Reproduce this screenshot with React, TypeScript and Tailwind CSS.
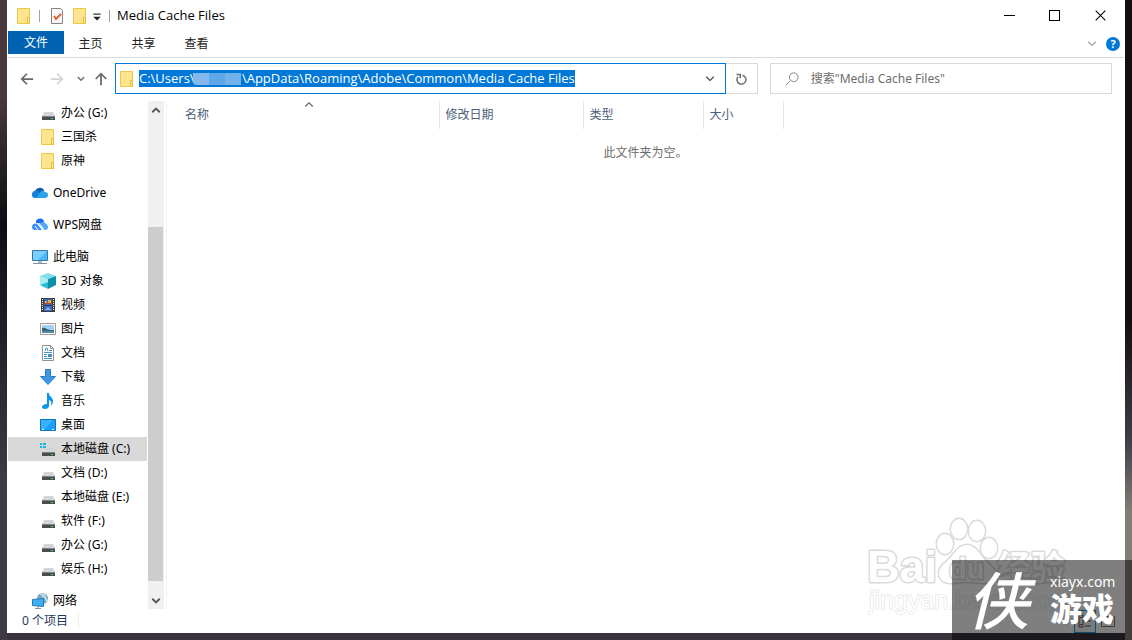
import React, { useEffect, useRef } from "react";

type IconProps = { children: React.ReactNode; className?: string };

const Icon = ({ children, className = "size-4 shrink-0" }: IconProps) => (
  <svg viewBox="0 0 16 16" className={className} fill="none" aria-hidden="true">
    {children}
  </svg>
);

const FolderIcon = () => (
  <Icon>
    <path d="M1.500.5h12v15h-12z" fill="#ffe48f" stroke="#edc74a" />
    <path d="M11.500 9.500h2v6h-2z" fill="#ffe48f" stroke="#e9bf3b" />
  </Icon>
);

const Drive = () => (
  <>
    <path d="M4 7h9l2 4H2z" fill="#d3d6d9" />
    <path d="M2 11h13v4H2z" fill="#4a4d50" />
    <path d="M2 11h13v1H2z" fill="#7d8184" />
    <path d="M11 13h2v1h-2z" fill="#2fe04a" />
  </>
);

const DriveIcon = () => (
  <Icon>
    <Drive />
  </Icon>
);

const SystemDriveIcon = () => (
  <Icon>
    <Drive />
    <path d="M0 2h2v2H0zM3 2h3v2H3zM0 5h2v2H0zM3 5h3v2H3z" fill="#19b5ea" />
  </Icon>
);

const OneDriveIcon = () => (
  <Icon>
    <path d="M3 7a5 5 0 0 1 9-2l-2 6H2z" fill="#0a5fb4" />
    <path d="M0 10a4 4 0 0 1 6-4l6 7H3a3 3 0 0 1-3-3z" fill="#1681d8" />
    <path d="M7 9c2-4 5-3 6-2a3 3 0 0 1 0 6H4z" fill="#2ba4ee" />
  </Icon>
);

const WpsIcon = () => (
  <Icon>
    <path d="M4 6a4 4 0 0 1 8-1l1 3-4 1-3-3z" fill="#1b6cf2" />
    <path d="M0 10c0-3 4-5 6-2l4 5H3a3 3 0 0 1-3-3z" fill="#3a8dff" />
    <path d="M8 6c3-2 8 1 8 4 0 2-1 3-3 3h-1z" fill="#52a9ff" />
    <path d="m7 6 5 7M3 9l3 4" stroke="#fff" />
  </Icon>
);

const ComputerIcon = () => (
  <Icon>
    <path d="M.5 1.500h15v10H.5z" fill="#46b8ff" stroke="#38769b" />
    <path d="M1 2h14L6 11H1z" fill="#76cfff" />
    <path d="M6 12h4v2H6z" fill="#b3bec5" />
    <path d="M1 14.500h14" stroke="#7f929d" />
  </Icon>
);

const CubeIcon = () => (
  <Icon>
    <path d="m0 3 8-3 8 3-8 3z" fill="#7fe0eb" />
    <path d="m0 3 8 3v10l-8-4z" fill="#28bdd1" />
    <path d="m8 6 8-3v9l-8 4z" fill="#0c91a8" />
    <path d="m0 3 8 3v3L0 12z" fill="#a5edf3" />
  </Icon>
);

const VideoIcon = () => (
  <Icon>
    <path d="M1 1h14v14H1z" fill="#3d3d3d" />
    <path d="M4 2h8v6H4zM4 9h8v5H4z" fill="#3e67c8" />
    <path d="M5 4h2v2H5zM8 3h3v3H8z" fill="#e3b22b" />
    <path d="M4 6h8v1H4z" fill="#ba4234" />
    <path d="m5 13 3-3 3 3z" fill="#80b9ee" />
    <path d="M2.500 2v12M13.500 2v12" stroke="#ececec" strokeDasharray="1 1" />
  </Icon>
);

const PictureIcon = () => (
  <Icon>
    <path d="M.5 2.500h15v11H.5z" fill="#fff" stroke="#9b9b9b" />
    <path d="M2 4h12v8H2z" fill="#a7d1f3" />
    <path d="M2 7c4-1 5 3 12 2v3H2z" fill="#396477" />
    <path d="M2 10h12v2H2z" fill="#558ba5" />
  </Icon>
);

const DocumentIcon = () => (
  <Icon>
    <path d="M2.500.5h8l3 3v12h-11z" fill="#fff" stroke="#919191" />
    <path d="M10.500.5v3h3" stroke="#919191" />
    <path d="m5 6 1-3h1l1 3M9 5.500h3M4 7.500h8M4 9.500h3M4 11.500h3M4 13.500h8" stroke="#3994d1" />
    <path d="M8 9h4v3H8z" fill="#5a88a7" />
  </Icon>
);

const DownloadIcon = () => (
  <Icon>
    <path d="M5.500.5h5v7h5L8 15.500.5 7.500h5z" fill="#3d97e5" stroke="#277fc8" />
  </Icon>
);

const MusicIcon = () => (
  <Icon>
    <path
      d="M7 0h2c0 4 4 4 4 8 0 2-1 4-2 5 1-4 0-5-2-6v6c0 2-2 3-4 3s-3-1-3-2c0-2 3-3 5-3z"
      fill="#0895ee"
    />
  </Icon>
);

const DesktopIcon = () => (
  <Icon>
    <path d="M.5 2.500h15v11H.5z" fill="#18a0fb" stroke="#0b75bd" />
    <path d="M1 3h12L5 12H1z" fill="#38b1ff" />
    <path d="M2 12.500h2m8 0h2" stroke="#d8efff" />
  </Icon>
);

const NetworkIcon = () => (
  <Icon>
    <circle cx="10.500" cy="5.500" r="5.500" fill="#77a9c4" />
    <path d="M8 1c4 0 1 3 4 3s1 3 3 4M11 1l3 2" stroke="#d0e6f0" strokeWidth="1.500" />
    <path d="m.5 6.500 11-1v8l-11-1z" fill="#3baff4" stroke="#2776ac" />
    <path d="M3 15.500h6M6 13v2" stroke="#7695a8" />
  </Icon>
);

const ChevronIcon = () => (
  <Icon className="size-3 shrink-0">
    <path d="m3 5 5 5 5-5" stroke="currentColor" strokeWidth="1.500" />
  </Icon>
);

const places = [
  {
    id: "quick",
    items: [
      { name: "办公 (G:)", icon: DriveIcon },
      { name: "三国杀", icon: FolderIcon },
      { name: "原神", icon: FolderIcon },
    ],
  },
  { id: "onedrive", root: { name: "OneDrive", icon: OneDriveIcon }, items: [] },
  { id: "wps", root: { name: "WPS网盘", icon: WpsIcon }, items: [] },
  {
    id: "computer",
    root: { name: "此电脑", icon: ComputerIcon },
    items: [
      { name: "3D 对象", icon: CubeIcon },
      { name: "视频", icon: VideoIcon },
      { name: "图片", icon: PictureIcon },
      { name: "文档", icon: DocumentIcon },
      { name: "下载", icon: DownloadIcon },
      { name: "音乐", icon: MusicIcon },
      { name: "桌面", icon: DesktopIcon },
      { name: "本地磁盘 (C:)", icon: SystemDriveIcon, selected: true },
      { name: "文档 (D:)", icon: DriveIcon },
      { name: "本地磁盘 (E:)", icon: DriveIcon },
      { name: "软件 (F:)", icon: DriveIcon },
      { name: "办公 (G:)", icon: DriveIcon },
      { name: "娱乐 (H:)", icon: DriveIcon },
    ],
  },
  { id: "network", root: { name: "网络", icon: NetworkIcon }, items: [] },
];

const columns = [
  { name: "修改日期", width: "w-36" },
  { name: "类型", width: "w-[120px]" },
  { name: "大小", width: "w-20" },
];

const path =
  "C:\\Users\\" + "\u00a0".repeat(14) + "\\AppData\\Roaming\\Adobe\\Common\\Media Cache Files";

const TitleBar = () => (
  <header className="flex h-[31px] items-center pl-2">
    <FolderIcon />
    <span className="ml-[7px] h-3 w-px bg-gray-400" />
    <button aria-label="属性" className="ml-[9px]">
      <Icon>
        <path d="M2.500.5h9l2 2v13h-11z" fill="#f7f7f7" stroke="#858585" />
        <path d="m5 8 2 3 5-5" stroke="#e8612c" strokeWidth="2" />
      </Icon>
    </button>
    <button aria-label="新建文件夹" className="ml-[7px]">
      <FolderIcon />
    </button>
    <button aria-label="自定义快速访问工具栏" className="ml-[3px]">
      <Icon className="h-4 w-3">
        <path d="M3 5.500h10" stroke="#222" strokeWidth="1.500" />
        <path d="M3 9h10l-5 5z" fill="#222" />
      </Icon>
    </button>
    <span className="ml-1.5 h-3 w-px bg-gray-400" />
    <h1 className="ml-[7px] flex-1 font-['Open_Sans',sans-serif] text-[13px]">
      Media Cache Files
    </h1>
    <button aria-label="最小化" className="flex w-[45px] justify-center">
      <Icon className="size-[11px]">
        <path d="M0 8h16" stroke="#000" strokeWidth="1.500" />
      </Icon>
    </button>
    <button aria-label="最大化" className="flex w-[45px] justify-center">
      <span className="size-[11px] border border-black" />
    </button>
    <button aria-label="关闭" className="flex w-[47px] justify-center">
      <Icon className="size-[11px]">
        <path d="m1 1 14 14M15 1 1 15" stroke="#000" strokeWidth="1.500" />
      </Icon>
    </button>
  </header>
);

const Ribbon = () => (
  <nav className="flex h-[27px] items-start border-b border-[#dadbdc] text-[#222]">
    <button className="h-[23px] w-14 bg-[#0063b1] text-white">文件</button>
    {["主页", "共享", "查看"].map((tab) => (
      <button key={tab} className="h-[25px] w-[53px]">
        {tab}
      </button>
    ))}
    <div className="ml-auto flex h-[26px] items-center gap-2 pr-1">
      <button aria-label="展开功能区" className="text-gray-400">
        <ChevronIcon />
      </button>
      <button
        aria-label="帮助"
        className="flex size-3.5 items-center justify-center rounded-full bg-[#0078d7] text-[11px] font-bold text-white"
      >
        ?
      </button>
    </div>
  </nav>
);

const AddressBar = () => {
  const input = useRef<HTMLInputElement>(null);

  useEffect(() => {
    input.current?.focus();
    input.current?.select();
  }, []);

  return (
    <div className="flex h-[41px] items-center pr-3 text-[#777]">
      <div className="flex w-[107px] items-center pl-3">
        <button aria-label="后退">
          <Icon className="size-3.5">
            <path d="M15 8H2m6-6L2 8l6 6" stroke="#686868" strokeWidth="2" />
          </Icon>
        </button>
        <button aria-label="前进" className="ml-4">
          <Icon className="size-3.5">
            <path d="M1 8h13M8 2l6 6-6 6" stroke="#d2d2d2" strokeWidth="2" />
          </Icon>
        </button>
        <button aria-label="最近浏览的位置" className="ml-3">
          <Icon className="size-2.5">
            <path d="m3 5 5 5 5-5" stroke="#777" strokeWidth="2.500" />
          </Icon>
        </button>
        <button aria-label="向上" className="ml-2">
          <Icon className="size-3.5">
            <path d="M8 15V2M2 8l6-6 6 6" stroke="#686868" strokeWidth="2" />
          </Icon>
        </button>
      </div>
      <div className="flex h-[31px] flex-1 items-center border border-[#0078d7] pl-[3px] pr-[9px]">
        <FolderIcon />
        <div className="relative ml-1 flex-1">
          <input
            ref={input}
            aria-label="地址"
            defaultValue={path}
            className="block h-[17px] w-full font-['Open_Sans',sans-serif] text-[13px] leading-[17px] text-black caret-[#e07a2c] outline-none selection:bg-[#0078d7] selection:text-white"
          />
          {/* hidden user name */}
          <span className="absolute left-[54px] top-[3px] flex h-3 w-12">
            <span className="w-4 rounded-bl bg-[#85b9eb]" />
            <span className="w-4 bg-[#5ea7e8]" />
            <span className="w-4 bg-[#72b1ea]" />
          </span>
        </div>
        <button aria-label="以前的位置" className="text-[#444]">
          <ChevronIcon />
        </button>
      </div>
      <button
        aria-label="刷新"
        className="flex h-[31px] w-8 items-center justify-center border border-l-0 border-[#d9d9d9]"
      >
        <Icon className="size-3">
          <path d="M10 3a6 6 0 1 1-6 2" stroke="#707070" strokeWidth="2" />
          <path d="M2 2h5v5" stroke="#707070" strokeWidth="2" />
        </Icon>
      </button>
      <label className="ml-3 flex h-[31px] w-[31%] items-center border border-[#d9d9d9] pl-3.5">
        <Icon className="size-3.5">
          <circle cx="10" cy="6" r="5" stroke="#777" />
          <path d="m6 10-5 5" stroke="#777" />
        </Icon>
        <input
          type="search"
          aria-label="搜索"
          placeholder={'搜索"Media Cache Files"'}
          className="ml-3 min-w-0 flex-1 text-xs outline-none placeholder:text-[#6d6d6d]"
        />
      </label>
    </div>
  );
};

const Sidebar = () => (
  <aside className="flex w-[159px] shrink-0 border-r border-[#f3f3f3]">
    <nav className="h-[508px] w-[140px] space-y-2 overflow-hidden pr-px">
      {places.map(({ id, root, items }) => (
        <div key={id}>
          {root && (
            <a href="#" className="flex h-6 items-center gap-[5px] pl-6">
              <root.icon />
              {root.name}
            </a>
          )}
          {items.map((item) => (
            <a
              key={item.name}
              href="#"
              className={`flex h-6 items-center gap-[5px] pl-8 ${
                "selected" in item ? "bg-[#d9d9d9]" : ""
              }`}
            >
              <item.icon />
              {item.name}
            </a>
          ))}
        </div>
      ))}
    </nav>
    <div className="flex w-4 flex-col bg-[#f0f0f0]">
      <button aria-label="向上滚动" className="flex h-[17px] items-center justify-center">
        <Icon className="size-3 rotate-180">
          <path d="m3 5 5 5 5-5" stroke="#555" strokeWidth="2.500" />
        </Icon>
      </button>
      <div className="flex flex-1 flex-col justify-end pb-[11px]">
        <div className="box-content h-3/4 w-[15px] bg-[#cdcdcd] pt-[7px]" />
      </div>
      <button aria-label="向下滚动" className="flex h-[17px] items-center justify-center">
        <Icon className="size-3">
          <path d="m3 5 5 5 5-5" stroke="#555" strokeWidth="2.500" />
        </Icon>
      </button>
    </div>
  </aside>
);

const FileList = () => (
  <main className="flex-1">
    <table className="w-full table-fixed border-collapse">
      <thead>
        <tr className="h-7 text-[#4c607a]">
          <th className="w-[272px] border-r border-[#e5e5e5] p-0 pl-3 font-normal">
            <button className="relative block w-full pl-1.5 text-left">
              名称
              <Icon className="absolute -top-2 left-1/2 size-3 -translate-x-1/2">
                <path d="m3 10 5-5 5 5" stroke="#666" strokeWidth="1.500" />
              </Icon>
            </button>
          </th>
          {columns.map(({ name, width }) => (
            <th key={name} className={`border-r border-[#e5e5e5] p-0 font-normal ${width}`}>
              <button className="block w-full pl-1.5 text-left">{name}</button>
            </th>
          ))}
          <th aria-label="其他" />
        </tr>
      </thead>
      <tbody>
        <tr>
          <td colSpan={5} className="pt-4 text-center text-[#6d6d6d]">
            此文件夹为空。
          </td>
        </tr>
      </tbody>
    </table>
  </main>
);

const StatusBar = () => (
  <footer className="flex h-6 items-center pl-3.5 text-[#1e395b]">
    <span className="border-r border-[#eee] pr-2.5">0 个项目</span>
    <div className="ml-auto flex items-center pr-2">
      <button
        aria-label="详细信息"
        className="flex h-[23px] w-[22px] items-center justify-center border border-[#26a0da] bg-[#f2f9fd]"
      >
        <Icon>
          <path d="M2 2h4v12H2zM8 3h6M8 8h6M8 13h6" stroke="#555" />
          <path d="M4 4v1m0 6v1" stroke="#d22" strokeWidth="2" />
        </Icon>
      </button>
      <button aria-label="大缩略图" className="ml-1">
        <Icon>
          <path d="M1.500 3.500h13v10h-13z" fill="#fff" stroke="#777" />
          <path d="M3 5h10v4H3z" fill="#3978c8" />
        </Icon>
      </button>
    </div>
  </footer>
);

const BaiduMark = () => (
  <svg
    viewBox="0 0 210 110"
    className="absolute bottom-[15px] right-[56px] h-[110px] w-[210px] font-['Liberation_Sans','Noto_Sans_CJK_SC',sans-serif] font-bold"
    fill="#fff"
    stroke="#dadada"
    strokeWidth="3"
    strokeLinejoin="round"
    paintOrder="stroke"
    aria-label="Baidu经验"
  >
    <text x="1" y="67" fontSize="45">Bai</text>
    <ellipse cx="79" cy="29" rx="8" ry="10" />
    <ellipse cx="93" cy="14" rx="8" ry="10" />
    <ellipse cx="111" cy="16" rx="8" ry="10" />
    <ellipse cx="123" cy="33" rx="8" ry="10" />
    <path d="M101 30c10 0 14 13 23 20 10 9 4 19-7 18-10-1-20-2-30 0-14 1-19-11-8-20 8-6 12-18 22-18z" />
    <text x="83" y="64" fontSize="29">du</text>
    <text x="131" y="65" fontSize="34">经验</text>
    <text x="3" y="94" fontSize="25" strokeWidth="1" className="font-normal">jingyan.baidu.com</text>
  </svg>
);

const SiteMark = () => (
  <div className="absolute bottom-0 right-0 flex h-20 w-[180px] items-center bg-black/50 pl-[15px] text-white">
    <span className="w-[83px] text-[62px] font-medium italic leading-[62px]">侠</span>
    <div>
      <p className="text-sm leading-[18px]">xiayx.com</p>
      <p className="text-[32px] font-black leading-9">游戏</p>
    </div>
  </div>
);

const App = () => {
  return (
    <div className="relative flex min-h-screen overflow-hidden bg-[#38333c] font-['Noto_Sans','Noto_Sans_CJK_SC',sans-serif] text-xs text-black">
      <div className="w-[7px] bg-linear-to-b from-[#4b383f] from-15% via-[#0b0f13] via-35% to-[#3f3a44] to-75%" />
      <div className="mb-[7px] flex flex-1 flex-col bg-white px-px">
        <TitleBar />
        <Ribbon />
        <AddressBar />
        <div className="flex flex-1 pt-0.5">
          <Sidebar />
          <FileList />
        </div>
        <StatusBar />
      </div>
      <div className="w-[7px] bg-linear-to-b from-[#160f0f] from-50% via-[#3b3b47] via-68% to-[#857e76] to-80%" />
      <BaiduMark />
      <SiteMark />
    </div>
  );
};

export default App;
